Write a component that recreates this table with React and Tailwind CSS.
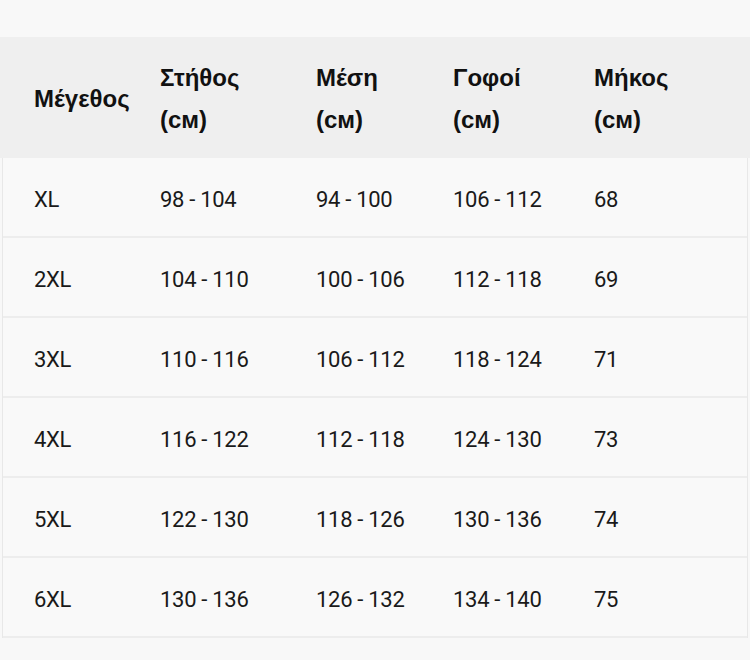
import React from 'react';

const HEAD = [
  ['Μέγεθος'],
  ['Στήθος', '(cм)'],
  ['Μέση', '(cм)'],
  ['Γοφοί', '(cм)'],
  ['Μήκος', '(cм)'],
];

const ROWS = [
  ['XL', '98 - 104', '94 - 100', '106 - 112', '68'],
  ['2XL', '104 - 110', '100 - 106', '112 - 118', '69'],
  ['3XL', '110 - 116', '106 - 112', '118 - 124', '71'],
  ['4XL', '116 - 122', '112 - 118', '124 - 130', '73'],
  ['5XL', '122 - 130', '118 - 126', '130 - 136', '74'],
  ['6XL', '130 - 136', '126 - 132', '134 - 140', '75'],
];

const COLS = 'grid grid-cols-[126px_156px_137px_141px_1fr]';

export default function App() {
  return (
    <div className="w-[750px] h-[660px] bg-[#f8f8f8] pt-[37px] text-[#111]">
      <div className={`${COLS} pl-[34px] pt-[2px] bg-[#efefef] h-[121px] items-center font-['Liberation_Sans',Arial,sans-serif] font-bold text-[24px] leading-[42px]`}>
        {HEAD.map((h, i) => (
          <div key={i} className="flex flex-col">
            {h.map((t) => (
              <span key={t}>{t}</span>
            ))}
          </div>
        ))}
      </div>
      <div className="mx-[2px] border-x border-[#e8e8e8] bg-[#f9f9f9] font-['Roboto',sans-serif] text-[22px] text-[#1a1a1a]">
        {ROWS.map((r) => (
          <div key={r[0]} className={`${COLS} pl-[31px] pt-[4px] h-[80px] items-center border-b-2 border-[#ededed]`}>
            {r.map((c, i) => (
              <span key={i} className="tracking-[-0.3px]">{c}</span>
            ))}
          </div>
        ))}
      </div>
    </div>
  );
}
